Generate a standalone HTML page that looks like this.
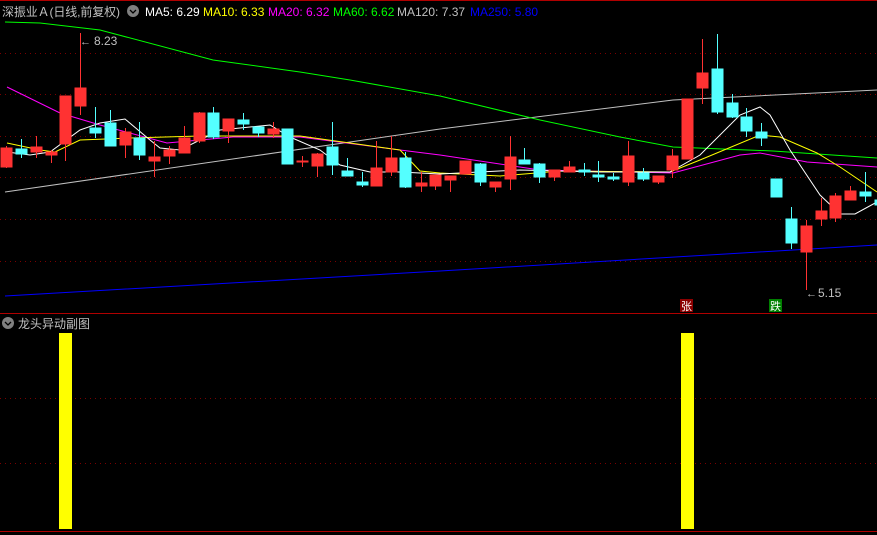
<!DOCTYPE html>
<html><head><meta charset="utf-8"><style>
html,body{margin:0;padding:0;background:#000;width:877px;height:535px;overflow:hidden}
svg{display:block}
text{font-family:"Liberation Sans","Noto Sans CJK SC",sans-serif}
</style></head><body>
<svg width="877" height="535" viewBox="0 0 877 535" xmlns="http://www.w3.org/2000/svg" shape-rendering="crispEdges">
<rect x="0" y="0" width="877" height="1" fill="#b00000"/>
<g fill="none" stroke="#7a0000" stroke-dasharray="1 4">
<line x1="0" y1="53.5" x2="877" y2="53.5"/><line x1="0" y1="94.5" x2="877" y2="94.5"/><line x1="0" y1="136.5" x2="877" y2="136.5"/><line x1="0" y1="177.5" x2="877" y2="177.5"/><line x1="0" y1="219.5" x2="877" y2="219.5"/><line x1="0" y1="261.5" x2="877" y2="261.5"/>
<line x1="0" y1="398.5" x2="877" y2="398.5"/><line x1="0" y1="463.5" x2="877" y2="463.5"/>
</g>
<rect x="0" y="313" width="877" height="1" fill="#b00000"/>
<rect x="0" y="531" width="877" height="1" fill="#b00000"/>
<g fill="none" stroke-width="1" shape-rendering="auto">
<polyline stroke="#0000ff" points="5,296 440,271 877,245"/>
<polyline stroke="#c0c0c0" points="5,192 440,129 673,100 877,90"/>
<polyline stroke="#00ff00" points="5,22 40,23 100,30 213,60 300,72 350,80 440,96 540,120 620,137 673,147 773,151 877,158"/>
<polyline stroke="#ff00ff" points="7,87 60,113 100,125 167,143 233,137 300,137 400,150 440,155 540,170 673,173 740,155 760,153 807,162 877,167"/>
<polyline stroke="#ffff00" points="7,143 40,150 55,152 80,140 130,138 200,136 300,136 400,150 420,171 440,173 500,176 560,171 670,172 700,160 760,135 780,137 817,153 840,167 877,192"/>
<polyline stroke="#ffffff" points="7,152 30,155 50,152 80,130 100,123 125,119 150,140 160,148 180,150 220,130 270,125 290,137 320,150 340,165 370,172 400,172 440,174 520,170 600,172 670,172 700,155 740,115 760,107 770,115 790,150 820,195 840,214 855,214 877,202"/>
</g>
<g>
<g stroke="#ff3232" fill="#ff3232">
<line x1="6.5" y1="146" x2="6.5" y2="168"/><rect x="1" y="148" width="11" height="19"/>
<line x1="36.5" y1="136" x2="36.5" y2="158"/><rect x="31" y="147" width="11" height="5"/>
<line x1="51.5" y1="150" x2="51.5" y2="163"/><rect x="46" y="152" width="11" height="3"/>
<line x1="65.5" y1="96" x2="65.5" y2="161"/><rect x="60" y="96" width="11" height="48"/>
<line x1="80.5" y1="33" x2="80.5" y2="115"/><rect x="75" y="88" width="11" height="18"/>
<line x1="125.5" y1="128" x2="125.5" y2="158"/><rect x="120" y="132" width="11" height="13"/>
<line x1="154.5" y1="141" x2="154.5" y2="177"/><rect x="149" y="157" width="11" height="4"/>
<line x1="169.5" y1="146" x2="169.5" y2="164"/><rect x="164" y="150" width="11" height="6"/>
<line x1="184.5" y1="126" x2="184.5" y2="153"/><rect x="179" y="138" width="11" height="15"/>
<line x1="199.5" y1="112" x2="199.5" y2="143"/><rect x="194" y="113" width="11" height="28"/>
<line x1="228.5" y1="119" x2="228.5" y2="143"/><rect x="223" y="119" width="11" height="12"/>
<line x1="273.5" y1="122" x2="273.5" y2="138"/><rect x="268" y="129" width="11" height="5"/>
<line x1="302.5" y1="156" x2="302.5" y2="167"/><rect x="297" y="161" width="11" height="1"/>
<line x1="317.5" y1="153" x2="317.5" y2="177"/><rect x="312" y="154" width="11" height="12"/>
<line x1="376.5" y1="141" x2="376.5" y2="186"/><rect x="371" y="168" width="11" height="18"/>
<line x1="391.5" y1="136" x2="391.5" y2="176"/><rect x="386" y="158" width="11" height="14"/>
<line x1="421.5" y1="172" x2="421.5" y2="192"/><rect x="416" y="183" width="11" height="3"/>
<line x1="435.5" y1="175" x2="435.5" y2="190"/><rect x="430" y="175" width="11" height="11"/>
<line x1="450.5" y1="176" x2="450.5" y2="192"/><rect x="445" y="176" width="11" height="4"/>
<rect x="460" y="161" width="11" height="13"/>
<line x1="495.5" y1="182" x2="495.5" y2="192"/><rect x="490" y="182" width="11" height="5"/>
<line x1="510.5" y1="136" x2="510.5" y2="190"/><rect x="505" y="157" width="11" height="22"/>
<line x1="554.5" y1="170" x2="554.5" y2="181"/><rect x="549" y="170" width="11" height="7"/>
<line x1="569.5" y1="161" x2="569.5" y2="172"/><rect x="564" y="167" width="11" height="5"/>
<line x1="628.5" y1="141" x2="628.5" y2="186"/><rect x="623" y="156" width="11" height="26"/>
<line x1="658.5" y1="176" x2="658.5" y2="184"/><rect x="653" y="176" width="11" height="6"/>
<line x1="672.5" y1="149" x2="672.5" y2="178"/><rect x="667" y="156" width="11" height="14"/>
<rect x="682" y="99" width="11" height="60"/>
<line x1="702.5" y1="39" x2="702.5" y2="104"/><rect x="697" y="73" width="11" height="15"/>
<line x1="806.5" y1="220" x2="806.5" y2="290"/><rect x="801" y="226" width="11" height="26"/>
<line x1="821.5" y1="198" x2="821.5" y2="226"/><rect x="816" y="211" width="11" height="8"/>
<line x1="835.5" y1="193" x2="835.5" y2="222"/><rect x="830" y="196" width="11" height="22"/>
<line x1="850.5" y1="186" x2="850.5" y2="200"/><rect x="845" y="191" width="11" height="9"/>
</g>
<g stroke="#54ffff" fill="#54ffff">
<line x1="21.5" y1="139" x2="21.5" y2="158"/><rect x="16" y="149" width="11" height="5"/>
<line x1="95.5" y1="107" x2="95.5" y2="138"/><rect x="90" y="128" width="11" height="5"/>
<line x1="110.5" y1="110" x2="110.5" y2="146"/><rect x="105" y="123" width="11" height="23"/>
<line x1="139.5" y1="122" x2="139.5" y2="160"/><rect x="134" y="138" width="11" height="17"/>
<line x1="213.5" y1="107" x2="213.5" y2="139"/><rect x="208" y="113" width="11" height="24"/>
<line x1="243.5" y1="113" x2="243.5" y2="130"/><rect x="238" y="120" width="11" height="4"/>
<line x1="258.5" y1="127" x2="258.5" y2="137"/><rect x="253" y="127" width="11" height="6"/>
<rect x="282" y="129" width="11" height="35"/>
<line x1="332.5" y1="122" x2="332.5" y2="175"/><rect x="327" y="147" width="11" height="18"/>
<line x1="347.5" y1="158" x2="347.5" y2="176"/><rect x="342" y="171" width="11" height="5"/>
<line x1="362.5" y1="172" x2="362.5" y2="187"/><rect x="357" y="182" width="11" height="3"/>
<line x1="405.5" y1="152" x2="405.5" y2="188"/><rect x="400" y="158" width="11" height="29"/>
<line x1="480.5" y1="163" x2="480.5" y2="186"/><rect x="475" y="164" width="11" height="18"/>
<line x1="524.5" y1="148" x2="524.5" y2="164"/><rect x="519" y="160" width="11" height="4"/>
<line x1="539.5" y1="163" x2="539.5" y2="183"/><rect x="534" y="164" width="11" height="13"/>
<line x1="584.5" y1="163" x2="584.5" y2="176"/><rect x="579" y="170" width="11" height="2"/>
<line x1="598.5" y1="161" x2="598.5" y2="182"/><rect x="593" y="175" width="11" height="2"/>
<line x1="613.5" y1="173" x2="613.5" y2="181"/><rect x="608" y="177" width="11" height="2"/>
<line x1="643.5" y1="168" x2="643.5" y2="181"/><rect x="638" y="173" width="11" height="6"/>
<line x1="717.5" y1="34" x2="717.5" y2="114"/><rect x="712" y="69" width="11" height="43"/>
<line x1="732.5" y1="94" x2="732.5" y2="118"/><rect x="727" y="103" width="11" height="14"/>
<line x1="746.5" y1="108" x2="746.5" y2="137"/><rect x="741" y="117" width="11" height="14"/>
<line x1="761.5" y1="123" x2="761.5" y2="146"/><rect x="756" y="132" width="11" height="6"/>
<rect x="771" y="179" width="11" height="18"/>
<line x1="791.5" y1="207" x2="791.5" y2="249"/><rect x="786" y="219" width="11" height="24"/>
<line x1="865.5" y1="172" x2="865.5" y2="202"/><rect x="860" y="192" width="11" height="4"/>
<rect x="875" y="200" width="3" height="5"/>
</g>
</g>
<text x="80" y="45" fill="#c0c0c0" font-size="11">←</text>
<text x="94" y="45" fill="#c0c0c0" font-size="12">8.23</text>
<text x="806" y="297" fill="#c0c0c0" font-size="11">←</text>
<text x="818" y="297" fill="#c0c0c0" font-size="12">5.15</text>
<rect x="680" y="299" width="13" height="13" fill="#8b0000"/>
<text x="681" y="310" fill="#fff" font-size="11">张</text>
<rect x="769" y="299" width="13" height="13" fill="#008000"/>
<text x="770" y="310" fill="#fff" font-size="11">跌</text>
<rect x="59" y="333" width="13" height="196" fill="#ffff00"/>
<rect x="681" y="333" width="13" height="196" fill="#ffff00"/>
<g font-size="12" shape-rendering="auto">
<text x="2" y="16" fill="#c0c0c0" textLength="118">深振业Ａ(日线,前复权)</text>
<circle cx="133" cy="11" r="6" fill="#808080"/>
<polyline points="130,10 133,13 136,10" fill="none" stroke="#000" stroke-width="1.3"/>
<text x="145" y="16" fill="#ffffff">MA5: 6.29</text>
<text x="203" y="16" fill="#ffff00">MA10: 6.33</text>
<text x="268" y="16" fill="#ff00ff">MA20: 6.32</text>
<text x="333" y="16" fill="#00ff00">MA60: 6.62</text>
<text x="397" y="16" fill="#c0c0c0">MA120: 7.37</text>
<text x="470" y="16" fill="#0000ff">MA250: 5.80</text>
<circle cx="8" cy="323" r="6" fill="#808080"/>
<polyline points="5,322 8,325 11,322" fill="none" stroke="#000" stroke-width="1.3"/>
<text x="18" y="328" fill="#c0c0c0">龙头异动副图</text>
</g>
</svg>
</body></html>
